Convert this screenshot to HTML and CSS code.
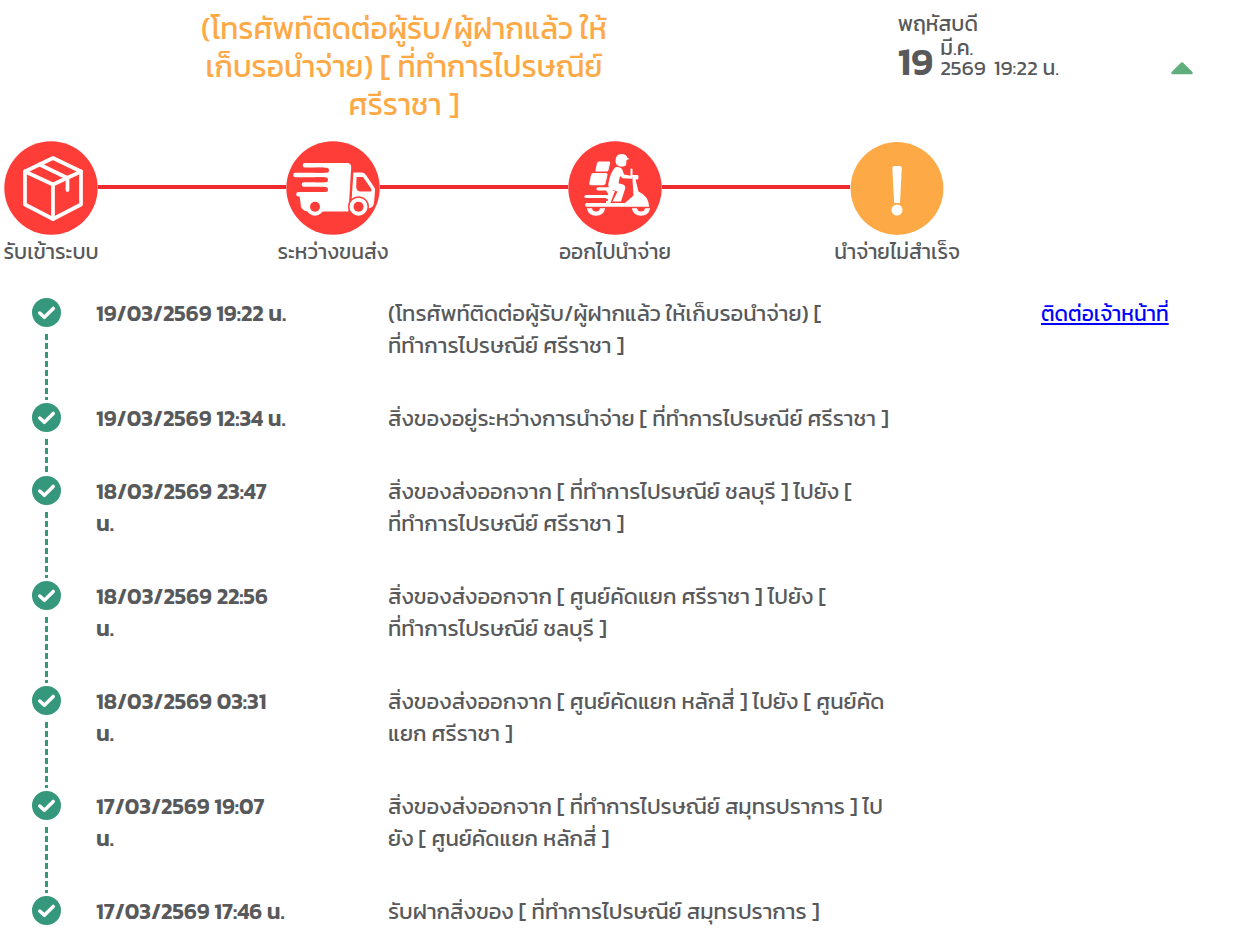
FILE: index.html
```html
<!DOCTYPE html>
<html lang="th">
<head>
<meta charset="utf-8">
<title>ติดตามสถานะพัสดุ</title>
<link rel="stylesheet" href="styles.css">
</head>
<body>
<svg class="sprite" aria-hidden="true">
  <symbol id="check" viewBox="0 0 30 30">
    <circle cx="15" cy="15" r="15" fill="#35977b"/>
    <path d="M8 15.5 L12.8 20 L22 10.8" fill="none" stroke="#fff" stroke-width="3.6" stroke-linecap="round" stroke-linejoin="round"/>
  </symbol>
</svg>
<main class="tracking">
  <header class="summary">
    <h1 class="summary-status">(โทรศัพท์ติดต่อผู้รับ/ผู้ฝากแล้ว ให้<br>เก็บรอนำจ่าย) [ ที่ทำการไปรษณีย์<br>ศรีราชา ]</h1>
    <div class="summary-date">
      <div class="weekday">พฤหัสบดี</div>
      <div class="date-row">
        <span class="day">19</span>
        <span class="month">มี.ค.<br><span class="year">2569</span>19:22 น.</span>
      </div>
    </div>
    <button class="toggle" type="button" aria-label="ย่อรายละเอียด">
      <svg width="24" height="14" viewBox="0 0 24 14"><path d="M2.5 12 L12 2.5 L21.5 12Z" fill="#5fae7b" stroke="#5fae7b" stroke-width="2.500" stroke-linejoin="round"/></svg>
    </button>
  </header>

  <section class="steps">
    <div class="step">
      <svg class="step-icon" viewBox="0 0 94 94">
        <circle cx="47" cy="47" r="46.700" fill="#fe3d39"/>
        <g fill="none" stroke="#fff" stroke-width="3.700" stroke-linejoin="round" stroke-linecap="round">
          <path d="M49 17 L77 30.500 V63.500 L49 78 L21 63.500 V30.500Z"/>
          <path d="M21 30.500 L49 43.500 L77 30.500 M49 43.500 V78 M35.500 23.500 L63.500 37 V49"/>
        </g>
      </svg>
      <span class="step-label">รับเข้าระบบ</span>
    </div>
    <div class="step-line"></div>
    <div class="step">
      <svg class="step-icon" viewBox="0 0 94 94">
        <circle cx="47" cy="47" r="46.700" fill="#fe3d39"/>
        <path d="M38 22 H61 Q65.500 22 65.200 26.500 L62.500 70.500 H22 Q14.500 70 14.500 62 L13.500 54 L38 50Z" fill="#fff"/>
        <path d="M19 24.200 H42 M9.500 34 H42 M18 43.500 H42 M12.500 53.200 H42" stroke="#fff" stroke-width="4.600" fill="none" stroke-linecap="round"/>
        <path d="M30 29.200 H40.500 M30 38.800 H39.500 M30 48.400 H39.500" stroke="#fe3d39" stroke-width="5" fill="none" stroke-linecap="round"/>
        <path d="M67 31.500 H76 Q78.500 31.500 80 34 L88 46 Q89.500 48 89 50 L88 62 Q87.500 66 84 67 L64 70.500Z" fill="#fff"/>
        <path d="M70.500 36 H77 L85 47.500 Q86 50.500 84.500 50.500 H74 Q70.500 50 70.200 46Z" fill="#fe3d39"/>
        <path d="M66.500 31 L64 70" stroke="#fe3d39" stroke-width="1.800"/>
        <g fill="#fff"><circle cx="29" cy="65.700" r="9"/><circle cx="72.500" cy="65.700" r="9.800" stroke="#fe3d39" stroke-width="1.500"/></g>
        <g fill="#fe3d39"><circle cx="29" cy="65.700" r="5"/><circle cx="72.500" cy="65.700" r="5"/></g>
      </svg>
      <span class="step-label">ระหว่างขนส่ง</span>
    </div>
    <div class="step-line"></div>
    <div class="step">
      <svg class="step-icon" viewBox="0 0 94 94">
        <circle cx="47" cy="47" r="46.700" fill="#fe3d39"/>
        <g fill="#fff">
          <path d="M31 20.500 H41 Q42.500 20.500 42.200 22 L40.500 29 Q40.200 30.500 38.500 30.500 H28.500 Q27 30.500 27.500 29 L29 22 Q29.300 20.500 31 20.500Z"/>
          <path d="M25.500 32 H38 Q39.800 32 39.500 34 L37.500 42.500 Q37 44.300 35 44.300 H23 Q21 44.300 21.300 42.300 L23 34 Q23.500 32 25.500 32Z"/>
          <path d="M47.500 20 Q47.500 13 53.500 13 Q58.500 13 59.500 17 L61.500 18 L58.500 19 L58 24.500 Q53 27 49 24 Q47.500 22.500 47.500 20Z"/>
          <path d="M47.500 26 Q53 25.500 54.500 29 L56 33.500 L64 35 V37.800 L54.500 37.200 L52 35 L50.500 42.200 L55 43.500 Q58 45 57 48 L53 60.500 H44.500 L49.500 50.500 L42.500 48 Q39.500 46 40.500 42 Q42.500 31 47.500 26Z"/>
          <path d="M64 34 H69.500 Q70.500 34 70.500 36 Q70.500 38.500 69.500 38.500 L67.500 38.500 L70.500 50.500 Q80.500 55 81.200 65.800 H18.500 Q17 65.800 17 64 Q17 62 18.500 62 H57 L65.500 54.500 L64.500 39Z"/>
          <path d="M18.800 67.300 H37.200 Q35.500 74.800 28 74.800 Q20.500 74.800 18.800 67.300Z"/>
          <path d="M63.800 67.300 H82.200 Q80.500 74.800 73 74.800 Q65.500 74.800 63.800 67.300Z"/>
        </g>
        <path d="M18 55.500 H42 M30 47.800 H44" stroke="#fff" stroke-width="3.200" stroke-linecap="round"/>
        <path d="M37 47 L47 50 L42 63 H38 V57 H42Z" fill="#fff"/>
        <path d="M18 58.900 H39" stroke="#fe3d39" stroke-width="2.200" stroke-linecap="round"/>
        <path d="M63.500 28.500 V35" stroke="#fff" stroke-width="2" stroke-linecap="round"/>
        <path d="M24 67 H32 Q31.500 70.500 28 70.500 Q24.500 70.500 24 67Z M69 67 H77 Q76.500 70.500 73 70.500 Q69.500 70.500 69 67Z" fill="#fe3d39"/>
      </svg>
      <span class="step-label">ออกไปนำจ่าย</span>
    </div>
    <div class="step-line"></div>
    <div class="step">
      <svg class="step-icon" viewBox="0 0 94 94">
        <circle cx="47" cy="47.500" r="46.400" fill="#fda946"/>
        <path d="M42.300 27 Q42.300 25 44.500 25 H49.500 Q51.800 25 51.800 27 L50 62 H44.200Z" fill="#fff"/>
        <circle cx="47" cy="69" r="5.500" fill="#fff"/>
      </svg>
      <span class="step-label">นำจ่ายไม่สำเร็จ</span>
    </div>
  </section>

  <ol class="events">
    <li class="event">
      <div class="marker"><svg class="check"><use href="#check"/></svg></div>
      <time class="event-time">19/03/2569 19:22 น.</time>
      <p class="event-text">(โทรศัพท์ติดต่อผู้รับ/ผู้ฝากแล้ว ให้เก็บรอนำจ่าย) [<br>ที่ทำการไปรษณีย์ ศรีราชา ]</p>
      <a class="contact" href="#contact">ติดต่อเจ้าหน้าที่</a>
    </li>
    <li class="event">
      <div class="marker"><svg class="check"><use href="#check"/></svg></div>
      <time class="event-time">19/03/2569 12:34 น.</time>
      <p class="event-text">สิ่งของอยู่ระหว่างการนำจ่าย [ ที่ทำการไปรษณีย์ ศรีราชา ]</p>
    </li>
    <li class="event">
      <div class="marker"><svg class="check"><use href="#check"/></svg></div>
      <time class="event-time">18/03/2569 23:47<br>น.</time>
      <p class="event-text">สิ่งของส่งออกจาก [ ที่ทำการไปรษณีย์ ชลบุรี ] ไปยัง [<br>ที่ทำการไปรษณีย์ ศรีราชา ]</p>
    </li>
    <li class="event">
      <div class="marker"><svg class="check"><use href="#check"/></svg></div>
      <time class="event-time">18/03/2569 22:56<br>น.</time>
      <p class="event-text">สิ่งของส่งออกจาก [ ศูนย์คัดแยก ศรีราชา ] ไปยัง [<br>ที่ทำการไปรษณีย์ ชลบุรี ]</p>
    </li>
    <li class="event">
      <div class="marker"><svg class="check"><use href="#check"/></svg></div>
      <time class="event-time">18/03/2569 03:31<br>น.</time>
      <p class="event-text">สิ่งของส่งออกจาก [ ศูนย์คัดแยก หลักสี่ ] ไปยัง [ ศูนย์คัด<br>แยก ศรีราชา ]</p>
    </li>
    <li class="event">
      <div class="marker"><svg class="check"><use href="#check"/></svg></div>
      <time class="event-time">17/03/2569 19:07<br>น.</time>
      <p class="event-text">สิ่งของส่งออกจาก [ ที่ทำการไปรษณีย์ สมุทรปราการ ] ไป<br>ยัง [ ศูนย์คัดแยก หลักสี่ ]</p>
    </li>
    <li class="event">
      <div class="marker"><svg class="check"><use href="#check"/></svg></div>
      <time class="event-time">17/03/2569 17:46 น.</time>
      <p class="event-text">รับฝากสิ่งของ [ ที่ทำการไปรษณีย์ สมุทรปราการ ]</p>
    </li>
  </ol>
</main>
</body>
</html>
```
FILE: styles.css
```css
* { box-sizing: border-box; }

body {
  margin: 0;
  background: #fff;
  color: #58595b;
  font-family: Kanit, Prompt, "Noto Sans Thai", Roboto, "Noto Sans", sans-serif;
  font-size: 21px;
}

.sprite { display: none; }

.tracking { padding-top: 10px; }

.summary {
  display: grid;
  grid-template-columns: 65.3% 1fr 86px;
  align-items: start;
}

.summary-status {
  margin: 0;
  color: #fda946;
  font-size: 30px;
  font-weight: 400;
  line-height: 38px;
  text-align: center;
  white-space: nowrap;
}

.summary-date {
  padding-left: 90px;
  white-space: nowrap;
}

.weekday { line-height: 28px; }

.date-row {
  display: flex;
  align-items: flex-end;
  gap: 7px;
  line-height: 20px;
}

.day {
  font-size: 38px;
  font-weight: 600;
  line-height: 32px;
}

.year { margin-right: 8px; }

.toggle {
  justify-self: start;
  margin-top: 51px;
  margin-left: 19px;
  padding: 0;
  border: 0;
  background: none;
  line-height: 0;
}

.steps {
  display: flex;
  width: 76%;
  margin-top: 17px;
  margin-left: 4px;
}

.step {
  display: flex;
  flex-direction: column;
  align-items: center;
  width: 94px;
}

.step-icon {
  flex: none;
  width: 94px;
  height: 94px;
}

.step-label {
  line-height: 34px;
  white-space: nowrap;
}

.step-line {
  flex: 1;
  height: 4px;
  margin-top: 44px;
  background: #ee2a2f;
}

.events {
  margin: 0;
  padding: 29px 0 0 32px;
  list-style: none;
}

.event {
  display: grid;
  grid-template-columns: 64px 292px 1fr 196px;
  line-height: 32px;
}

.marker {
  display: flex;
  flex-direction: column;
  align-items: center;
  width: 29px;
}

.check {
  flex: none;
  width: 29px;
  height: 29px;
}

.marker::after {
  content: "";
  flex: 1;
  width: 3px;
  margin: 7px 0 3px;
  background: repeating-linear-gradient(#35977b 0 6px, transparent 6px 9px);
}

.event:last-child .marker::after { display: none; }

.event-time {
  font-size: 22px;
  font-weight: 600;
}

.event-text {
  margin: 0;
  padding-bottom: 41px;
  font-size: 22px;
  white-space: nowrap;
}

.event:last-child .event-text { padding-bottom: 0; }

.contact {
  justify-self: start;
  color: #00f;
}
```
